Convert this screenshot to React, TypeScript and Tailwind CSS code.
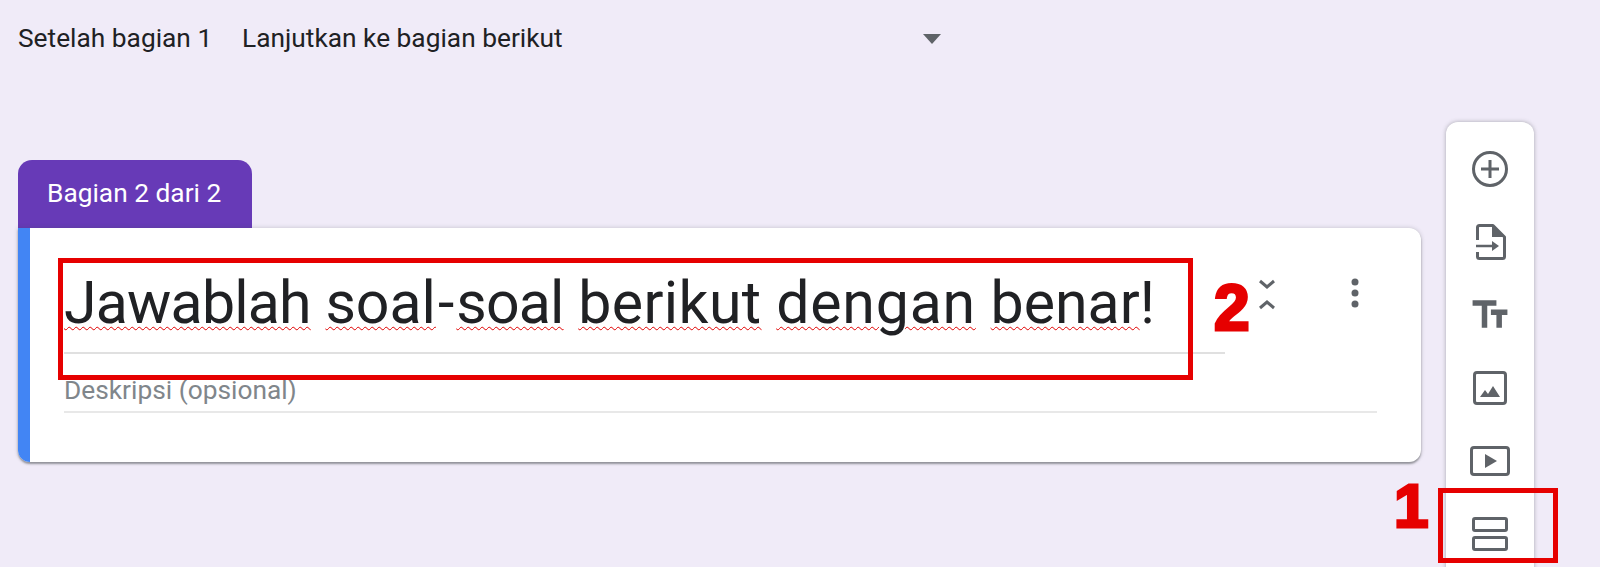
import { MdTextFields } from 'react-icons/md'

function Spell({ children, className = '' }: { children: string; className?: string }) {
  return (
    <span className={`underline decoration-wavy decoration-[#e00000] decoration-[1px] underline-offset-[3px] ${className}`}>
      {children}
    </span>
  )
}

const tools = [
  <svg key="add" width="38" height="38" viewBox="0 0 38 38" fill="none" stroke="#5f6368" strokeWidth="3">
    <circle cx="19" cy="19" r="16.5" />
    <path d="M10 19h18M19 10v18" />
  </svg>,
  <svg key="import" width="38" height="38" viewBox="0 0 38 38" fill="none">
    <path d="M6.500 17V4.500a2 2 0 0 1 2-2H22L33.500 14v19.500a2 2 0 0 1-2 2h-23a2 2 0 0 1-2-2V29" stroke="#5f6368" strokeWidth="3" strokeLinejoin="round" />
    <path d="M21 2l13 12H21z" fill="#5f6368" />
    <path d="M5 23h17" stroke="#5f6368" strokeWidth="2.500" />
    <path d="M21 18l7 5-7 5z" fill="#5f6368" />
  </svg>,
  <MdTextFields key="title" size={44} color="#5f6368" />,
  <svg key="image" width="34" height="34" viewBox="0 0 34 34" fill="none">
    <rect x="1.500" y="1.500" width="31" height="31" rx="2.500" stroke="#5f6368" strokeWidth="3" />
    <path d="M7 26l5-7 3 4 5-8 7 11z" fill="#5f6368" />
  </svg>,
  <svg key="video" width="40" height="30" viewBox="0 0 40 30" fill="none">
    <rect x="1.500" y="1.500" width="37" height="27" rx="2.500" stroke="#5f6368" strokeWidth="3" />
    <path d="M15 8l12 7-12 7z" fill="#5f6368" />
  </svg>,
  <svg key="section" width="36" height="34" viewBox="0 0 36 34" fill="none" stroke="#5f6368" strokeWidth="3">
    <rect x="1.500" y="1.500" width="33" height="12" rx="1.500" />
    <rect x="1.500" y="20.500" width="33" height="12" rx="1.500" />
  </svg>,
]

export default function App() {
  return (
    <div className="relative flex h-[567px] w-[1600px] flex-col overflow-hidden bg-[#f0ebf8] font-['Roboto',sans-serif] text-[#202124]">
      <div className="flex h-[78px] shrink-0 items-center pl-[18px]">
        <span className="w-[224px] text-[26.300px]">Setelah bagian 1</span>
        <div className="flex w-[699px] items-center justify-between">
          <span className="text-[26.300px]">Lanjutkan ke bagian berikut</span>
          <span className="h-0 w-0 border-x-[9px] border-t-[10px] border-x-transparent border-t-[#5f6368]" />
        </div>
      </div>

      <div className="flex flex-1 pl-[18px]">
        <div className="mt-[82px] w-[1403px]">
          <div className="flex h-[68px] w-[234px] items-center rounded-t-[14px] bg-[#673ab7] pl-[29px] text-[26.300px] text-white">
            Bagian 2 dari 2
          </div>
          <div className="flex h-[234px] rounded-b-[12px] rounded-tr-[12px] bg-white shadow-[0_2px_2px_rgba(60,64,67,0.45),0_0_4px_rgba(60,64,67,0.25)]">
            <div className="w-[12px] rounded-bl-[12px] bg-[#4285f4]" />
            <div className="flex flex-1 pl-[34px] pr-[44px]">
              <div className="flex-1">
                <div className="flex">
                  <div className="w-[1161px]">
                    <div className="h-[126px] border-b-2 border-[#e0e0e0] pt-[41px] text-[59px] leading-[68px] whitespace-nowrap">
                      <Spell className="tracking-[-0.8px]">Jawablah</Spell> <Spell>soal</Spell>
                      <span className="mx-[2px]">-</span>
                      <Spell className="tracking-[-0.8px]">soal</Spell> <Spell className="tracking-[0.4px]">berikut</Spell>{' '}
                      <Spell className="tracking-[0.8px]">dengan</Spell> <Spell>benar</Spell>!
                    </div>
                  </div>
                  <div className="flex flex-1 justify-between pl-[33px] pr-[18px] pt-[50px]">
                    <svg width="18" height="34" viewBox="0 0 18 34" fill="none" stroke="#5f6368" strokeWidth="3">
                      <path d="M2 3l7 6 7-6M2 30l7-6 7 6" />
                    </svg>
                    <svg width="8" height="30" viewBox="0 0 8 30" fill="#5f6368">
                      <circle cx="4" cy="4" r="3.500" />
                      <circle cx="4" cy="15" r="3.500" />
                      <circle cx="4" cy="26" r="3.500" />
                    </svg>
                  </div>
                </div>
                <div className="flex h-[59px] items-end border-b-2 border-[#e8e8e8] pb-[1px] text-[26.300px] text-[#80868b]">
                  Deskripsi (opsional)
                </div>
              </div>
            </div>
          </div>
        </div>

        <div className="ml-[25px] mt-[44px] flex h-[500px] w-[88px] flex-col items-center rounded-t-[12px] bg-white pt-[10px] shadow-[0_0_4px_rgba(60,64,67,0.4)]">
          {tools.map((icon, i) => (
            <div key={i} className="flex h-[73px] items-center justify-center">
              {icon}
            </div>
          ))}
        </div>
      </div>

      <div className="absolute left-[58px] top-[258px] h-[122px] w-[1135px] border-[5px] border-[#e60000]" />
      <div className="absolute left-[1438px] top-[488px] h-[75px] w-[120px] border-[5px] border-[#e60000]" />
      <span className="absolute left-[1214px] top-[276px] font-['Liberation_Sans',sans-serif] text-[64px] leading-[64px] font-bold text-[#e60000] [-webkit-text-stroke:3px_#e60000]">
        2
      </span>
      <span className="absolute left-[1394px] top-[475px] font-['Liberation_Sans',sans-serif] text-[62px] leading-[62px] font-bold text-[#e60000] [-webkit-text-stroke:3px_#e60000]">
        1
      </span>
    </div>
  )
}
